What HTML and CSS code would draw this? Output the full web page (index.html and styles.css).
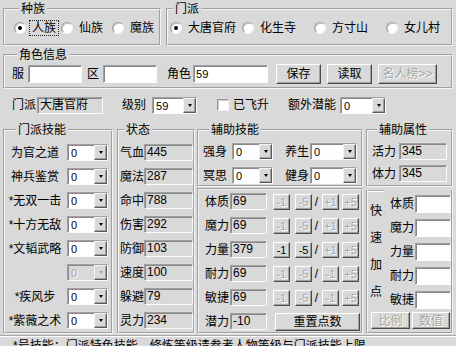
FILE: index.html
```html
<!DOCTYPE html>
<html lang="zh-CN">
<head>
    <meta charset="UTF-8">
    <title>属性计算器</title>
    <link rel="stylesheet" href="styles.css">
</head>
<body>
<div class="dlg">

    <div class="top">
        <fieldset class="race">
            <legend>种族</legend>
            <div class="radios">
                <label class="opt w47"><span class="radio on"></span><span class="txt focus">人族</span></label>
                <label class="opt w51"><span class="radio"></span><span class="txt">仙族</span></label>
                <label class="opt"><span class="radio"></span><span class="txt">魔族</span></label>
            </div>
        </fieldset>
        <fieldset class="school">
            <legend>门派</legend>
            <div class="radios">
                <label class="opt w72"><span class="radio on"></span><span class="txt">大唐官府</span></label>
                <label class="opt w72"><span class="radio"></span><span class="txt">化生寺</span></label>
                <label class="opt w72"><span class="radio"></span><span class="txt">方寸山</span></label>
                <label class="opt"><span class="radio"></span><span class="txt">女儿村</span></label>
            </div>
        </fieldset>
    </div>

    <fieldset class="info">
        <legend>角色信息</legend>
        <div class="inforow">
            <span>服</span>
            <span class="field ml4 w54"></span>
            <span class="ml5">区</span>
            <span class="field ml4 w54"></span>
            <span class="ml10">角色</span>
            <span class="field ml2 w75">59</span>
            <span class="btn big ml8 w45">保存</span>
            <span class="btn big ml6 w45">读取</span>
            <span class="btn big off ml6 w59">名人榜&gt;&gt;</span>
        </div>
    </fieldset>

    <div class="line">
        <span>门派</span>
        <span class="field ro ml1 w66">大唐官府</span>
        <span class="ml19">级别</span>
        <div class="sel ml6 w45"><span class="v">59</span><span class="dd"></span></div>
        <span class="check ml20"></span>
        <span class="ml4">已飞升</span>
        <span class="ml19">额外潜能</span>
        <div class="sel ml4 w46"><span class="v">0</span><span class="dd"></span></div>
    </div>

    <div class="main">
        <fieldset class="skills">
            <legend>门派技能</legend>
            <div class="stack">
                <div class="srow"><span class="slbl">为官之道</span><div class="sel ml5 w41"><span class="v">0</span><span class="dd"></span></div></div>
                <div class="srow"><span class="slbl">神兵鉴赏</span><div class="sel ml5 w41"><span class="v">0</span><span class="dd"></span></div></div>
                <div class="srow"><span class="slbl">*无双一击</span><div class="sel ml5 w41"><span class="v">0</span><span class="dd"></span></div></div>
                <div class="srow"><span class="slbl">*十方无敌</span><div class="sel ml5 w41"><span class="v">0</span><span class="dd"></span></div></div>
                <div class="srow"><span class="slbl">*文韬武略</span><div class="sel ml5 w41"><span class="v">0</span><span class="dd"></span></div></div>
                <div class="srow"><span class="slbl"></span><div class="sel off ml5 w41"><span class="v">0</span><span class="dd"></span></div></div>
                <div class="srow"><span class="slbl">*疾风步</span><div class="sel ml5 w41"><span class="v">0</span><span class="dd"></span></div></div>
                <div class="srow"><span class="slbl">*紫薇之术</span><div class="sel ml5 w41"><span class="v">0</span><span class="dd"></span></div></div>
            </div>
        </fieldset>

        <fieldset class="state">
            <legend>状态</legend>
            <div class="stack">
                <div class="srow"><span>气血</span><span class="field ro w49">445</span></div>
                <div class="srow"><span>魔法</span><span class="field ro w49">287</span></div>
                <div class="srow"><span>命中</span><span class="field ro w49">788</span></div>
                <div class="srow"><span>伤害</span><span class="field ro w49">292</span></div>
                <div class="srow"><span>防御</span><span class="field ro w49">103</span></div>
                <div class="srow"><span>速度</span><span class="field ro w49">100</span></div>
                <div class="srow"><span>躲避</span><span class="field ro w49">79</span></div>
                <div class="srow"><span>灵力</span><span class="field ro w49">234</span></div>
            </div>
        </fieldset>

        <div class="col mid">
            <fieldset class="aux">
                <legend>辅助技能</legend>
                <div class="stack">
                    <div class="srow">
                        <span>强身</span><div class="sel ml5 w41"><span class="v">0</span><span class="dd"></span></div>
                        <span class="ml12">养生</span><div class="sel ml1 w47"><span class="v">0</span><span class="dd"></span></div>
                    </div>
                    <div class="srow">
                        <span>冥思</span><div class="sel ml5 w41"><span class="v">0</span><span class="dd"></span></div>
                        <span class="ml12">健身</span><div class="sel ml1 w47"><span class="v">0</span><span class="dd"></span></div>
                    </div>
                </div>
            </fieldset>
            <div class="box points">
                <div class="stack">
                    <div class="srow">
                        <span>体质</span><span class="field ro ml1 w37">69</span>
                        <span class="btn sm off ml6">-1</span><span class="btn sm off ml5">-5</span><span class="slash">/</span><span class="btn sm off ml2">+1</span><span class="btn sm off ml3">+5</span>
                    </div>
                    <div class="srow">
                        <span>魔力</span><span class="field ro ml1 w37">69</span>
                        <span class="btn sm off ml6">-1</span><span class="btn sm off ml5">-5</span><span class="slash">/</span><span class="btn sm off ml2">+1</span><span class="btn sm off ml3">+5</span>
                    </div>
                    <div class="srow">
                        <span>力量</span><span class="field ro ml1 w37">379</span>
                        <span class="btn sm ml6">-1</span><span class="btn sm ml5">-5</span><span class="slash">/</span><span class="btn sm off ml2">+1</span><span class="btn sm off ml3">+5</span>
                    </div>
                    <div class="srow">
                        <span>耐力</span><span class="field ro ml1 w37">69</span>
                        <span class="btn sm off ml6">-1</span><span class="btn sm off ml5">-5</span><span class="slash">/</span><span class="btn sm off ml2">-1</span><span class="btn sm off ml3">+5</span>
                    </div>
                    <div class="srow">
                        <span>敏捷</span><span class="field ro ml1 w37">69</span>
                        <span class="btn sm off ml6">-1</span><span class="btn sm off ml5">-5</span><span class="slash">/</span><span class="btn sm off ml2">-1</span><span class="btn sm off ml3">+5</span>
                    </div>
                    <div class="srow">
                        <span>潜力</span><span class="field ro ml1 w37">-10</span>
                        <span class="btn reset ml8">重置点数</span>
                    </div>
                </div>
            </div>
        </div>

        <div class="col side">
            <fieldset class="attr">
                <legend>辅助属性</legend>
                <div class="stack tight">
                    <div class="srow"><span>活力</span><span class="field ro ml3 w48">345</span></div>
                    <div class="srow"><span>体力</span><span class="field ro ml3 w48">345</span></div>
                </div>
            </fieldset>
            <div class="box quick">
                <div class="qgrid">
                    <div class="qchars"><span>快</span><span>速</span><span>加</span><span>点</span></div>
                    <div class="stack qrows">
                        <div class="qrow"><span>体质</span><span class="field ml1 w36"></span></div>
                        <div class="qrow"><span>魔力</span><span class="field ml1 w36"></span></div>
                        <div class="qrow"><span>力量</span><span class="field ml1 w36"></span></div>
                        <div class="qrow"><span>耐力</span><span class="field ml1 w36"></span></div>
                        <div class="qrow"><span>敏捷</span><span class="field ml1 w36"></span></div>
                    </div>
                </div>
                <div class="qbtns">
                    <span class="btn off ml1 w39">比例</span>
                    <span class="btn off ml2 w38">数值</span>
                </div>
            </div>
        </div>
    </div>

    <div class="sep"></div>
    <div class="note">*号技能：门派特色技能，修炼等级请参考人物等级与门派技能上限</div>
</div>
</body>
</html>
```

FILE: styles.css
```css
body {
    margin: 0;
    width: 456px;
    height: 346px;
    overflow: hidden;
    background: #d9d9d9;
    color: #000;
    font-family: "Liberation Sans", "Noto Sans CJK SC", sans-serif;
    font-size: 12px;
    line-height: 14px;
}

.dlg {
    padding: 2px 3px 0;
}

fieldset {
    margin: 0;
    padding: 0;
    min-width: 0;
    border: 2px groove #f4f4f4;
}

legend {
    margin-left: 5px;
    padding: 0 2px;
    height: 14px;
    line-height: 14px;
}

/* radio groups */
.top {
    display: flex;
    gap: 5px;
}

.race {
    width: 158px;
    box-sizing: border-box;
    padding: 4px 0 8px 9px;
}

.school {
    flex: 1;
    padding: 4px 0 8px 2px;
}

.school legend {
    margin-left: 3px;
}

.radios {
    display: flex;
    align-items: center;
    height: 16px;
}

.opt {
    display: flex;
    align-items: center;
}

.w47 { width: 47px; }
.w51 { width: 51px; }
.w72 { width: 72px; }

.radio {
    width: 12px;
    height: 12px;
    box-sizing: border-box;
    margin-right: 3px;
    border-radius: 50%;
    background: #fff;
    border: 1px solid;
    border-color: #999 #f4f4f4 #f4f4f4 #999;
    box-shadow: inset 1px 1px #d0d0d0;
}

.radio.on::after {
    content: "";
    display: block;
    width: 4px;
    height: 4px;
    margin: 3px;
    border-radius: 50%;
    background: #000;
}

.txt {
    padding: 0 2px;
    border: 1px dotted transparent;
}

.focus {
    border-color: #222;
}

/* role info */
.info {
    margin-top: 2px;
    padding: 2px 0 3px 7px;
}

.inforow {
    display: flex;
    align-items: center;
    height: 20px;
}

.line {
    display: flex;
    align-items: center;
    height: 18px;
    padding: 7px 0 9px 9px;
}

.ml1 { margin-left: 1px; }
.ml2 { margin-left: 2px; }
.ml3 { margin-left: 3px; }
.ml4 { margin-left: 4px; }
.ml5 { margin-left: 5px; }
.ml6 { margin-left: 6px; }
.ml8 { margin-left: 8px; }
.ml10 { margin-left: 10px; }
.ml12 { margin-left: 12px; }
.ml19 { margin-left: 19px; }
.ml20 { margin-left: 20px; }

.w36 { width: 36px; }
.w37 { width: 37px; }
.w38 { width: 38px; }
.w39 { width: 39px; }
.w41 { width: 41px; }
.w45 { width: 45px; }
.w46 { width: 46px; }
.w47 { width: 47px; }
.w48 { width: 48px; }
.w49 { width: 49px; }
.w54 { width: 54px; }
.w59 { width: 59px; }
.w66 { width: 66px; }
.w75 { width: 75px; }

/* controls */
.field {
    display: block;
    box-sizing: border-box;
    height: 18px;
    padding-left: 2px;
    background: #fff;
    border: 1px solid;
    border-color: #a0a0a0 #fbfbfb #fbfbfb #a0a0a0;
    box-shadow: inset 1px 1px #888;
    font-size: 11px;
    line-height: 16px;
}

.field.ro {
    background: #d9d9d9;
    height: 17px;
    line-height: 15px;
    font-size: 12px;
}

.check {
    display: block;
    width: 12px;
    height: 12px;
    box-sizing: border-box;
    background: #fff;
    border: 1px solid;
    border-color: #999 #f4f4f4 #f4f4f4 #999;
    box-shadow: inset 1px 1px #d0d0d0;
}

.sel {
    display: flex;
    box-sizing: border-box;
    height: 17px;
    background: #fff;
    border: 1px solid;
    border-color: #a0a0a0 #fbfbfb #fbfbfb #a0a0a0;
    box-shadow: inset 1px 1px #888;
}

.sel .v {
    flex: 1;
    padding: 1px 0 0 3px;
    font-size: 11px;
    line-height: 14px;
}

.sel .dd {
    display: flex;
    align-items: center;
    justify-content: center;
    width: 13px;
    box-sizing: border-box;
    background: #d9d9d9;
    border: 1px solid;
    border-color: #f4f4f4 #5a5a5a #5a5a5a #f4f4f4;
    box-shadow: inset -1px -1px #a0a0a0;
}

.sel .dd::after {
    content: "";
    border-left: 2.5px solid transparent;
    border-right: 2.5px solid transparent;
    border-top: 3px solid #000;
}

.sel.off {
    background: #d9d9d9;
}

.sel.off .v {
    color: #a8a8a8;
    text-shadow: 1px 1px #fff;
}

.sel.off .dd::after {
    border-top-color: #a8a8a8;
}

.btn {
    display: flex;
    align-items: center;
    justify-content: center;
    box-sizing: border-box;
    height: 17px;
    background: #d9d9d9;
    border: 1px solid;
    border-color: #fff #4a4a4a #4a4a4a #fff;
    box-shadow: inset -1px -1px #a0a0a0;
}

.btn.big {
    height: 20px;
}

.btn.sm {
    width: 17px;
    height: 16px;
    font-size: 11px;
}

.btn.reset {
    width: 85px;
    height: 18px;
}

.btn.off {
    color: #a6a6a6;
    text-shadow: 1px 1px #fff;
}

.slash {
    width: 7px;
    margin-left: 1px;
    text-align: center;
}

/* main area */
.main {
    display: flex;
}

.stack {
    display: flex;
    flex-direction: column;
    gap: 7px;
}

.srow {
    display: flex;
    align-items: center;
    height: 17px;
}

.skills {
    width: 110px;
    box-sizing: border-box;
    padding: 7px 2px 3px 3px;
}

.skills legend {
    margin-left: 8px;
}

.slbl {
    width: 54px;
    text-align: center;
}

.state {
    width: 78px;
    box-sizing: border-box;
    margin-left: 4px;
    padding: 7px 0 3px 1px;
}

.state legend {
    margin-left: 4px;
}

.col {
    display: flex;
    flex-direction: column;
}

.mid {
    width: 166px;
    margin-left: 2px;
}

.side {
    width: 87px;
    margin-left: 3px;
}

.aux {
    padding: 6px 0 1px 4px;
}

.aux legend {
    margin-left: 6px;
}

.box {
    flex: 1;
    border: 2px groove #f4f4f4;
}

.points {
    margin-top: 1px;
    padding: 3px 0 0 6px;
}

.attr {
    padding: 6px 0 3px 4px;
}

.tight {
    gap: 5px;
}

.quick {
    margin-top: 3px;
    border-top: none;
    padding-left: 2px;
}

.quick::before {
    content: "";
    display: block;
    width: 16px;
    margin-left: -2px;
    border-top: 1px solid #acacac;
    border-bottom: 1px solid #fff;
}

.qgrid {
    display: flex;
}

.qchars {
    width: 20px;
    padding-top: 6px;
    display: flex;
    flex-direction: column;
}

.qchars span {
    line-height: 27px;
}

.qrows {
    padding-top: 3px;
    gap: 6px;
}

.qrow {
    display: flex;
    align-items: center;
    height: 18px;
}

.qbtns {
    display: flex;
    margin-top: 3px;
}

.sep {
    margin: 1px -3px 0;
    border-top: 1px solid #a8a8a8;
    border-bottom: 1px solid #fff;
}

.note {
    padding: 2px 0 0 10px;
    white-space: nowrap;
}
```
